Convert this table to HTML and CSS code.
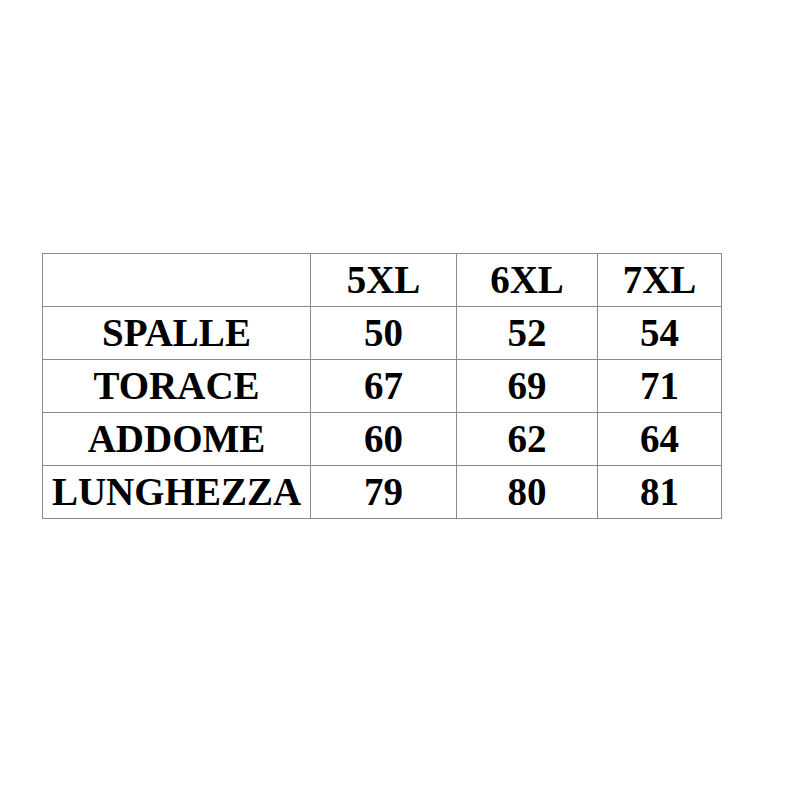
FILE: index.html
```html
<!DOCTYPE html>
<html>
<head>
<meta charset="utf-8">
<link rel="stylesheet" href="styles.css">
</head>
<body>
<div class="page">
<table class="sizes">
<colgroup><col class="c1"><col class="c2"><col class="c3"><col class="c4"></colgroup>
<tr><td></td><td>5XL</td><td>6XL</td><td>7XL</td></tr>
<tr><td>SPALLE</td><td>50</td><td>52</td><td>54</td></tr>
<tr><td>TORACE</td><td>67</td><td>69</td><td>71</td></tr>
<tr><td>ADDOME</td><td>60</td><td>62</td><td>64</td></tr>
<tr><td>LUNGHEZZA</td><td>79</td><td>80</td><td>81</td></tr>
</table>
</div>
</body>
</html>
```
FILE: styles.css
```css
html, body { margin: 0; padding: 0; background: #fff; }
.page { width: 800px; height: 800px; padding: 253px 0 0 42px; box-sizing: border-box; }
.sizes {
  border-collapse: collapse;
  table-layout: fixed;
  width: 679px;
  font-family: "Liberation Serif", "Times New Roman", serif;
  font-weight: bold;
  font-size: 39px;
  color: #000;
}
.c1 { width: 268px; }
.c2 { width: 146px; }
.c3 { width: 141px; }
.c4 { width: 124px; }
.sizes td {
  border: 1px solid #8a8a8a;
  height: 52px;
  padding: 0;
  text-align: center;
  vertical-align: middle;
  line-height: 52px;
  white-space: nowrap;
}
```
